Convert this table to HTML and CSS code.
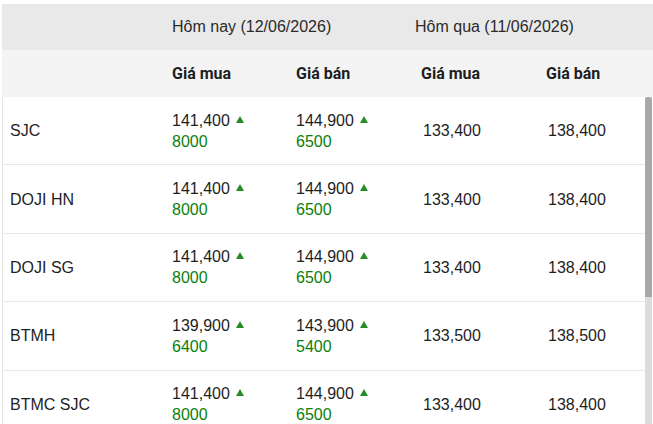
FILE: index.html
```html
<!DOCTYPE html>
<html lang="vi">
<head>
<meta charset="utf-8">
<title>Giá vàng</title>
<link rel="stylesheet" href="styles.css">
</head>
<body>
<div class="price-table">
  <div class="head">
    <div class="hrow hrow-top">
      <div class="hcell"></div>
      <div class="hcell span2 pad-today">Hôm nay (12/06/2026)</div>
      <div class="hcell span2 pad-yest">Hôm qua (11/06/2026)</div>
    </div>
    <div class="hrow hrow-sub">
      <div class="hcell"></div>
      <div class="hcell sub">Giá mua</div>
      <div class="hcell sub">Giá bán</div>
      <div class="hcell sub">Giá mua</div>
      <div class="hcell sub">Giá bán</div>
    </div>
  </div>
  <div class="body">
    <div class="rows">
      <div class="row">
        <div class="cell name">SJC</div>
        <div class="cell today"><div class="val">141,400<span class="up"></span></div><div class="diff">8000</div></div>
        <div class="cell today"><div class="val">144,900<span class="up"></span></div><div class="diff">6500</div></div>
        <div class="cell yest">133,400</div>
        <div class="cell yest">138,400</div>
      </div>
      <div class="row">
        <div class="cell name">DOJI HN</div>
        <div class="cell today"><div class="val">141,400<span class="up"></span></div><div class="diff">8000</div></div>
        <div class="cell today"><div class="val">144,900<span class="up"></span></div><div class="diff">6500</div></div>
        <div class="cell yest">133,400</div>
        <div class="cell yest">138,400</div>
      </div>
      <div class="row">
        <div class="cell name">DOJI SG</div>
        <div class="cell today"><div class="val">141,400<span class="up"></span></div><div class="diff">8000</div></div>
        <div class="cell today"><div class="val">144,900<span class="up"></span></div><div class="diff">6500</div></div>
        <div class="cell yest">133,400</div>
        <div class="cell yest">138,400</div>
      </div>
      <div class="row">
        <div class="cell name">BTMH</div>
        <div class="cell today"><div class="val">139,900<span class="up"></span></div><div class="diff">6400</div></div>
        <div class="cell today"><div class="val">143,900<span class="up"></span></div><div class="diff">5400</div></div>
        <div class="cell yest">133,500</div>
        <div class="cell yest">138,500</div>
      </div>
      <div class="row">
        <div class="cell name">BTMC SJC</div>
        <div class="cell today"><div class="val">141,400<span class="up"></span></div><div class="diff">8000</div></div>
        <div class="cell today"><div class="val">144,900<span class="up"></span></div><div class="diff">6500</div></div>
        <div class="cell yest">133,400</div>
        <div class="cell yest">138,400</div>
      </div>
    </div>
    <div class="scrollbar"><div class="thumb"></div></div>
  </div>
</div>
</body>
</html>
```

FILE: styles.css
```css
html, body {
  margin: 0;
  padding: 0;
  overflow: hidden;
  background: #ffffff;
}

body {
  font-family: "Liberation Sans", Arial, sans-serif;
  font-size: 16px;
  color: #1e1e1e;
}

.price-table {
  padding: 4px 0 0 2px;
}

.hrow {
  display: grid;
  grid-template-columns: 158px 124px 125px 125px 1fr;
  align-items: center;
}

.hrow-top {
  height: 46px;
  background: #e9e9e9;
  color: #2b2b2b;
}

.hrow-sub {
  height: 47px;
  background: #f4f4f4;
}

.span2 {
  grid-column: span 2;
}

.pad-today {
  padding-left: 12px;
}

.pad-yest {
  padding-left: 6px;
}

.sub {
  padding-left: 12px;
  font-family: Roboto, "Liberation Sans", sans-serif;
  font-weight: 700;
  font-size: 16px;
  color: #1e1e1e;
}

.body {
  position: relative;
  width: 650px;
  height: 330px;
  overflow: hidden;
  border-left: 1px solid #e6e6e6;
  padding-right: 7px;
  box-sizing: border-box;
}

.scrollbar {
  position: absolute;
  top: 0;
  right: 0;
  bottom: 0;
  width: 7px;
  background: #dcdcdc;
}

.thumb {
  height: 200px;
  background: #a8a8a8;
  border-radius: 3px 3px 0 0;
}

.row {
  display: grid;
  grid-template-columns: 157px 124px 125px 125px 1fr;
  align-items: center;
  height: 68.4px;
  box-sizing: border-box;
  border-bottom: 1px solid #e9e9e9;
}

.cell {
  line-height: 21px;
}

.name {
  padding-left: 7px;
}

.today {
  padding-left: 12px;
}

.yest {
  padding-left: 14px;
}

.diff {
  color: #0b800b;
}

.up {
  display: inline-block;
  width: 0;
  height: 0;
  margin-left: 6px;
  margin-bottom: 3px;
  border-left: 4px solid transparent;
  border-right: 4px solid transparent;
  border-bottom: 7px solid #268c26;
}
```
